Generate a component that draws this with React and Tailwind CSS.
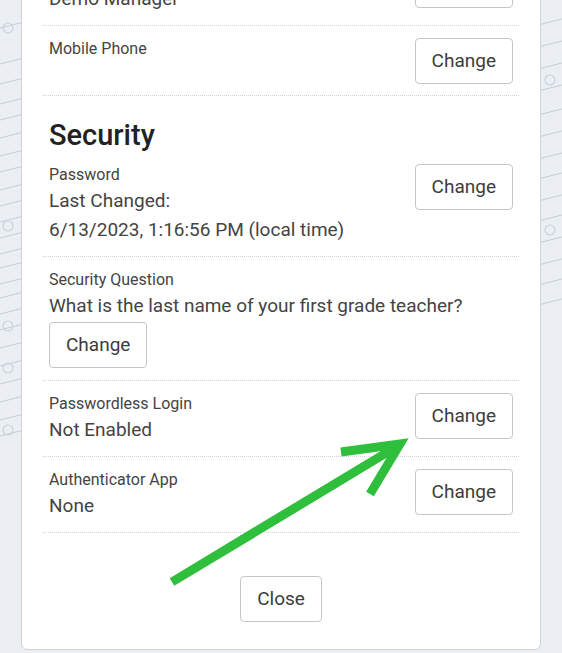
import React from "react";

const font = { fontFamily: "Roboto, 'Liberation Sans', sans-serif" };

// faint sketch lines behind the modal
const leftLines = [22, 58, 78, 98, 114, 132, 150, 166, 184, 200, 216, 232, 248, 262, 278, 292, 308, 324, 342, 360, 378, 396, 414, 430];
const rightLines = [18, 40, 62, 84, 108, 130, 152, 172, 194, 214, 236, 258, 278, 298];

function Backdrop() {
  return (
    <svg className="absolute inset-0 h-full w-full" viewBox="0 0 562 653" preserveAspectRatio="none">
      {leftLines.map((y) => (
        <line key={"l" + y} x1="-4" y1={y + 7} x2="24" y2={y} stroke="#c3cbd3" strokeWidth="1" />
      ))}
      {rightLines.map((y) => (
        <line key={"r" + y} x1="538" y1={y + 7} x2="566" y2={y} stroke="#c3cbd3" strokeWidth="1" />
      ))}
      {[28, 226, 326, 368, 430].map((y) => (
        <circle key={"c" + y} cx="8" cy={y} r="5" fill="none" stroke="#cbd2da" strokeWidth="1.2" />
      ))}
      {[80, 230].map((y) => (
        <circle key={"rc" + y} cx="550" cy={y} r="5" fill="none" stroke="#cbd2da" strokeWidth="1.2" />
      ))}
    </svg>
  );
}

function ChangeButton({ label = "Change" }) {
  return (
    <button className="h-[46px] shrink-0 rounded border border-[#c6c6c6] bg-white px-[16px] text-[19px] text-[#3c3c3c]">
      {label}
    </button>
  );
}

function Row({ label, lines = [], inlineButton, children }) {
  return (
    <div className="flex items-start justify-between border-b border-dotted border-[#d6d6d6] px-[6px] pt-3 pb-3">
      <div className="flex flex-col">
        <span className="text-[16px] leading-[22px] text-[#444]">{label}</span>
        {lines.map((l) => (
          <span key={l} className="text-[19px] leading-[29px] text-[#444]">
            {l}
          </span>
        ))}
        {inlineButton && (
          <div className="mt-[2px]">
            <ChangeButton />
          </div>
        )}
      </div>
      {children}
    </div>
  );
}

function Arrow() {
  return (
    <svg className="pointer-events-none absolute inset-0 h-full w-full" viewBox="0 0 562 653">
      <g stroke="#30bf3d" strokeWidth="9" fill="none" strokeLinecap="butt" strokeLinejoin="miter">
        <line x1="172" y1="582" x2="396" y2="447" />
        <polyline points="341,452 400,444 370,494" />
      </g>
    </svg>
  );
}

export default function App() {
  return (
    <div className="relative h-[653px] w-[562px] overflow-hidden bg-[#ebeff3]" style={font}>
      <Backdrop />
      <div className="relative mx-[21px] -mt-[51px] rounded-b-md border border-[#d2d2d2] bg-white px-[21px]">
        <Row label="Name" lines={["Demo Manager"]}>
          <ChangeButton />
        </Row>
        <div className="flex items-start justify-between border-b border-dotted border-[#d6d6d6] px-[6px] pt-3 pb-[11px]">
          <span className="text-[16px] leading-[22px] text-[#444]">Mobile Phone</span>
          <ChangeButton />
        </div>

        <h2 className="px-[6px] pt-[23px] text-[29px] font-medium leading-[33px] text-[#222]">Security</h2>

        <Row label="Password" lines={["Last Changed:", "6/13/2023, 1:16:56 PM (local time)"]}>
          <ChangeButton />
        </Row>
        <Row label="Security Question" lines={["What is the last name of your first grade teacher?"]} inlineButton />
        <Row label="Passwordless Login" lines={["Not Enabled"]}>
          <ChangeButton />
        </Row>
        <Row label="Authenticator App" lines={["None"]}>
          <ChangeButton />
        </Row>

        <div className="flex justify-center pt-[43px] pb-[27px]">
          <ChangeButton label="Close" />
        </div>
      </div>
      <Arrow />
    </div>
  );
}
